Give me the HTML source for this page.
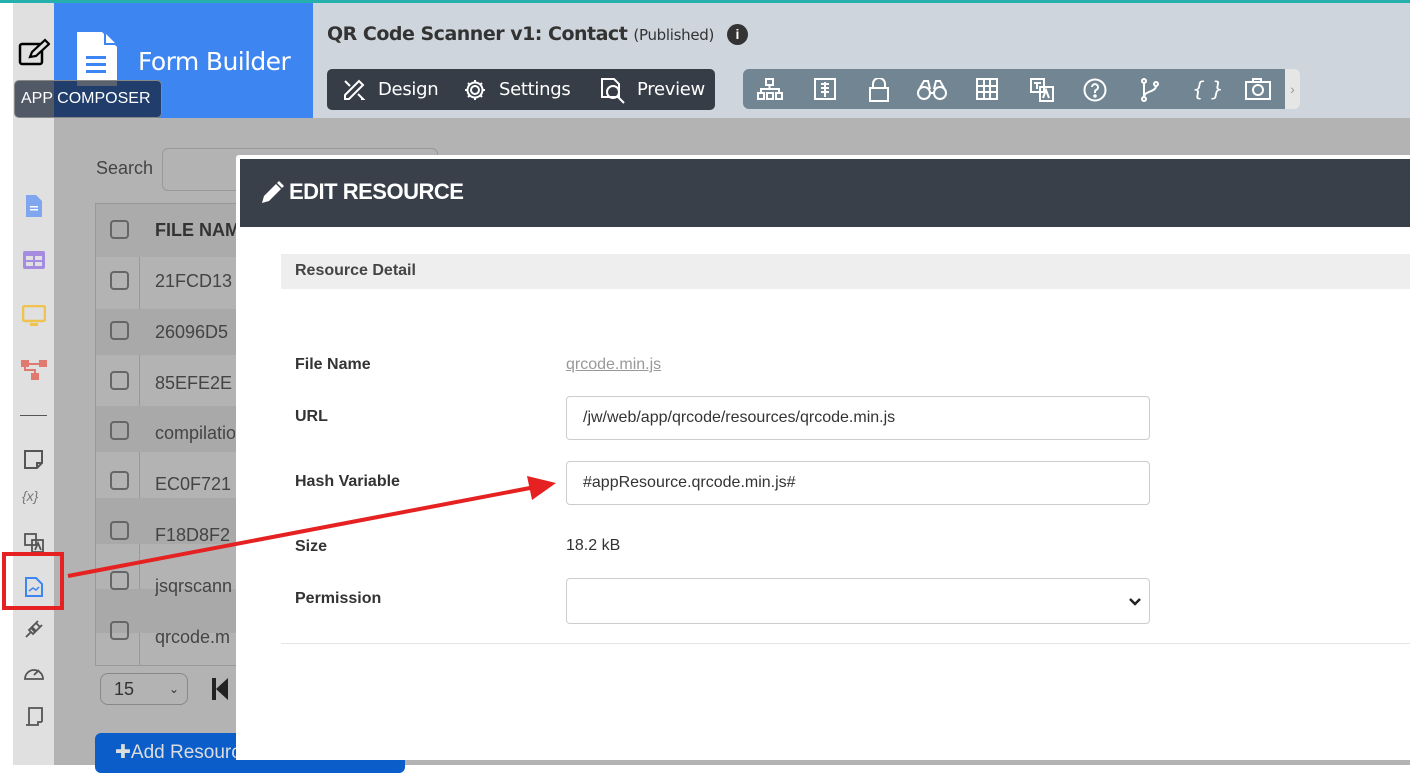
<!DOCTYPE html>
<html><head><meta charset="utf-8"><style>
*{box-sizing:border-box;margin:0;padding:0}
body{width:1410px;height:765px;overflow:hidden;position:relative;background:#fff;font-family:"Liberation Sans",sans-serif}
.a{position:absolute}
.tb svg{position:absolute;top:9px}
.cb{width:19px;height:19px;border:2px solid #666;border-radius:4px;margin-bottom:31px}
</style></head><body>
<div class="a" style="left:0;top:0;width:1410px;height:3px;background:#26b0ad"></div>
<div class="a" style="left:13px;top:3px;width:41px;height:762px;background:#e0e0e0"></div>
<div class="a" style="left:54px;top:3px;width:259px;height:115px;background:#3d85f0"></div>
<div class="a" style="left:313px;top:3px;width:1097px;height:115px;background:#cfd5dc"></div>
<div class="a" style="left:54px;top:118px;width:1356px;height:647px;background:#b3b3b3"></div>
<svg class="a" style="left:18px;top:38px" width="32" height="30" viewBox="0 0 32 30"><rect x="2" y="6" width="22" height="20" rx="2" fill="none" stroke="#000" stroke-width="2.5"/><path d="M12 19 L14 14 L27 2 L31 6 L18 18 Z" fill="#e0e0e0" stroke="#000" stroke-width="2.2"/></svg>
<svg class="a" style="left:75px;top:32px" width="44" height="56" viewBox="0 0 44 56"><path d="M2 0 H27 L42 15 V54 H2 Z" fill="#fff"/><path d="M29 0 L42 13 H29Z" fill="#3d85f0"/><path d="M31 2 L40 11 H31Z" fill="#fff"/><rect x="11" y="24" width="20" height="3" fill="#3d85f0"/><rect x="11" y="31" width="20" height="3" fill="#3d85f0"/><rect x="11" y="38" width="20" height="3" fill="#3d85f0"/></svg>
<div class="a" style="left:138px;top:47px;color:#fff;font-size:25px;font-family:'DejaVu Sans',sans-serif;letter-spacing:-0.6px">Form Builder</div>
<div class="a" style="left:14px;top:80px;width:148px;height:38px;background:rgba(20,30,50,0.7);border:1px solid #888;border-radius:5px;color:#fff;font-size:16px;line-height:36px;padding-left:6px">APP COMPOSER</div>
<div class="a" style="left:327px;top:23px;font-size:19px;font-weight:bold;color:#333;font-family:'DejaVu Sans',sans-serif;letter-spacing:-0.5px;white-space:nowrap">QR Code Scanner v1: Contact <span style="font-weight:normal;font-size:15px;letter-spacing:-0.3px">(Published)</span></div>
<div class="a" style="left:727px;top:24px;width:21px;height:21px;border-radius:50%;background:#333;color:#fff;font-size:14px;font-weight:bold;text-align:center;line-height:21px">i</div>
<div class="a" style="left:327px;top:69px;width:388px;height:41px;background:#373d46;border-radius:5px;color:#fff;font-size:18px;font-family:'DejaVu Sans',sans-serif;letter-spacing:-0.3px">
<svg class="a" style="left:15px;top:9px" width="24" height="24" viewBox="0 0 24 24" fill="none" stroke="#fff" stroke-width="2"><path d="M3 17 L17 3 L21 7 L7 21 L3 21Z M3 3 L8 8 M16 16 L21 21 L19 21"/></svg>
<span class="a" style="left:51px;top:10px">Design</span>
<svg class="a" style="left:136px;top:9px" width="24" height="24" viewBox="0 0 24 24" fill="none" stroke="#fff" stroke-width="2"><circle cx="12" cy="12" r="4"/><path d="M12 2v3M12 19v3M2 12h3M19 12h3M5 5l2 2M17 17l2 2M5 19l2-2M17 7l2-2"/><circle cx="12" cy="12" r="7.5"/></svg>
<span class="a" style="left:172px;top:10px">Settings</span>
<svg class="a" style="left:272px;top:8px" width="28" height="28" viewBox="0 0 28 28" fill="none" stroke="#fff" stroke-width="2"><path d="M3 2H15L20 7V20H3Z"/><circle cx="14" cy="15" r="6"/><path d="M18 19 L25 26"/></svg>
<span class="a" style="left:310px;top:10px">Preview</span></div>
<div class="a" style="left:743px;top:69px;width:542px;height:40px;background:#728592;border-radius:6px 0 0 6px"></div>
<div class="a" style="left:1285px;top:69px;width:15px;height:40px;background:#e6e6e6;border-radius:0 6px 6px 0;color:#999;font-size:14px;line-height:40px;text-align:center">›</div>
<div class="a tb" style="left:743px;top:69px;width:542px;height:40px">
<svg style="left:14px" width="26" height="22" viewBox="0 0 26 22" fill="none" stroke="#fff" stroke-width="2"><rect x="9" y="1" width="7" height="6"/><rect x="1" y="15" width="6" height="6"/><rect x="10" y="15" width="6" height="6"/><rect x="19" y="15" width="6" height="6"/><path d="M12.5 7V11M4 15V11H22V15"/></svg>
<svg style="left:71px" width="22" height="22" viewBox="0 0 22 22" fill="none" stroke="#fff" stroke-width="2"><rect x="1" y="1" width="20" height="20"/><path d="M7 6H15M7 10H15M7 14H15M11 4V19"/></svg>
<svg style="left:126px" width="20" height="24" viewBox="0 0 20 24" fill="none" stroke="#fff" stroke-width="2"><rect x="1" y="10" width="18" height="13"/><path d="M4 10V6a6 6 0 0 1 12 0v4"/></svg>
<svg style="left:174px" width="30" height="22" viewBox="0 0 30 22" fill="none" stroke="#fff" stroke-width="2"><circle cx="7" cy="15" r="6"/><circle cx="23" cy="15" r="6"/><path d="M13 15h4M3 10L7 3H11L13 11M27 10L23 3H19L17 11"/></svg>
<svg style="left:233px" width="22" height="22" viewBox="0 0 22 22" fill="none" stroke="#fff" stroke-width="2"><rect x="1" y="1" width="20" height="20"/><path d="M8 1V21M14 1V21M1 8H21M1 14H21"/></svg>
<svg style="left:287px" width="24" height="24" viewBox="0 0 24 24" fill="none" stroke="#fff" stroke-width="2"><rect x="1" y="1" width="13" height="13"/><rect x="10" y="9" width="13" height="14"/><path d="M4 5h7M7 5v6M13 20l3-8 3 8"/></svg>
<svg style="left:340px" width="24" height="24" viewBox="0 0 24 24" fill="none" stroke="#fff" stroke-width="2"><circle cx="12" cy="12" r="10.5"/><path d="M9 9a3 3 0 1 1 4 3c-1 .5-1 1-1 3"/><circle cx="12" cy="18" r="0.8" fill="#fff"/></svg>
<svg style="left:397px" width="20" height="24" viewBox="0 0 20 24" fill="none" stroke="#fff" stroke-width="2"><circle cx="4" cy="3" r="2"/><circle cx="4" cy="21" r="2"/><circle cx="16" cy="6" r="2"/><path d="M4 5V19M16 8c0 6-12 5-12 11"/></svg>
<span class="a" style="left:449px;top:8px;color:#fff;font-size:20px;font-style:italic;white-space:nowrap;font-family:'DejaVu Sans',sans-serif">{ }</span>
<svg style="left:502px" width="26" height="22" viewBox="0 0 26 22" fill="none" stroke="#fff" stroke-width="2"><rect x="1" y="4" width="24" height="17"/><path d="M8 4V1H16V4"/><circle cx="13" cy="12" r="5"/></svg>
</div>
<!-- sidebar icons -->
<svg class="a" style="left:24px;top:194px" width="20" height="24"><path d="M2 1H12L18 7V23H2Z" fill="#7fa6ee"/><rect x="6" y="12" width="8" height="1.5" fill="#fff"/><rect x="6" y="15" width="8" height="1.5" fill="#fff"/></svg>
<svg class="a" style="left:23px;top:251px" width="22" height="18"><rect x="0" y="0" width="22" height="18" rx="2" fill="#a58ce0"/><rect x="3" y="5" width="7" height="4" fill="#e0e0e0"/><rect x="12" y="5" width="7" height="4" fill="#e0e0e0"/><rect x="3" y="11" width="7" height="4" fill="#e0e0e0"/><rect x="12" y="11" width="7" height="4" fill="#e0e0e0"/></svg>
<svg class="a" style="left:22px;top:305px" width="24" height="22"><rect x="1" y="1" width="22" height="15" rx="2" fill="none" stroke="#f0c24e" stroke-width="2.5"/><rect x="8" y="18" width="8" height="3" fill="#f0c24e"/></svg>
<svg class="a" style="left:21px;top:360px" width="26" height="22"><rect x="0" y="0" width="8" height="7" fill="#e07a70"/><rect x="18" y="0" width="8" height="7" fill="#e07a70"/><rect x="10" y="13" width="8" height="7" fill="#e07a70"/><path d="M4 7 V10 H14 V13 M8 4H18" stroke="#e07a70" stroke-width="2" fill="none"/></svg>
<div class="a" style="left:20px;top:415px;width:27px;height:1px;background:#555"></div>
<svg class="a" style="left:24px;top:450px" width="20" height="20" fill="none" stroke="#555" stroke-width="2"><path d="M1 1H18V13L13 18H1Z M13 18V13H18"/></svg>
<div class="a" style="left:22px;top:488px;font-size:14px;color:#777;font-style:italic">{x}</div>
<svg class="a" style="left:24px;top:533px" width="20" height="20" fill="none" stroke="#555" stroke-width="1.8"><rect x="1" y="1" width="11" height="11"/><rect x="8" y="7" width="11" height="12"/><path d="M11 17l3-7 3 7"/></svg>
<svg class="a" style="left:25px;top:577px" width="18" height="20"><path d="M1 1H11L17 7V19H1Z" fill="none" stroke="#3d85f0" stroke-width="2"/><path d="M4 14 L8 11 L11 13 L14 10" stroke="#3d85f0" stroke-width="1.5" fill="none"/></svg>
<svg class="a" style="left:24px;top:619px" width="20" height="20" fill="none" stroke="#555" stroke-width="1.8"><path d="M2 18L7 13M7 9L11 13L9 15L5 11Z M9 7L14 2M13 11L18 6M8 8L12 4L16 8L12 12Z"/></svg>
<svg class="a" style="left:23px;top:663px" width="22" height="18" fill="none" stroke="#555" stroke-width="1.8"><path d="M2 16A9 9 0 1 1 20 16Z M11 12L16 7"/></svg>
<svg class="a" style="left:24px;top:705px" width="20" height="22" fill="none" stroke="#555" stroke-width="1.8"><path d="M5 20V3H18V17M2 20H14V17H18"/></svg>
<!-- background table -->
<div class="a" style="left:96px;top:158px;font-size:18px;color:#444">Search</div>
<div class="a" style="left:162px;top:148px;width:276px;height:43px;border:1px solid #999;border-radius:6px"></div>
<div class="a" style="left:95px;top:203px;width:145px;height:463px;border:1px solid #999"></div>
<div class="a" style="left:139px;top:203px;width:1px;height:463px;background:#999"></div>
<div class="a" style="left:96px;top:204px;width:144px;height:53px;background:#ababab"></div>
<div class="a" style="left:155px;top:220px;font-weight:bold;font-size:18px;color:#333">FILE NAM</div>
<div class="a" style="left:96px;top:309px;width:144px;height:46px;background:#a9a9a9"></div>
<div class="a" style="left:96px;top:406px;width:144px;height:46px;background:#a9a9a9"></div>
<div class="a" style="left:96px;top:498px;width:144px;height:46px;background:#a9a9a9"></div>
<div class="a" style="left:96px;top:589px;width:144px;height:44px;background:#a9a9a9"></div>
<div class="a" style="left:155px;top:256px;font-size:18px;color:#444;line-height:50.8px;width:80px;overflow:hidden;white-space:nowrap">21FCD13<br>26096D5<br>85EFE2E<br>compilatio<br>EC0F721<br>F18D8F2<br>jsqrscann<br>qrcode.m</div>
<div class="a cb" style="left:110px;top:220px"></div>
<div class="a" style="left:110px;top:271px"><div class="cb"></div><div class="cb"></div><div class="cb"></div><div class="cb"></div><div class="cb"></div><div class="cb"></div><div class="cb"></div><div class="cb"></div></div>
<div class="a" style="left:100px;top:673px;width:88px;height:32px;border:1px solid #888;border-radius:8px;font-size:18px;color:#333;padding:5px 13px">15<span style="position:absolute;right:8px;font-size:12px;top:8px">⌄</span></div>
<div class="a" style="left:212px;top:678px;width:4px;height:22px;background:#222"></div><div class="a" style="left:216px;top:678px;width:0;height:0;border-top:11px solid transparent;border-bottom:11px solid transparent;border-right:12px solid #222"></div>
<div class="a" style="left:95px;top:733px;width:310px;height:40px;background:#0b5ec9;border-radius:6px;color:#ddd;font-size:19px;padding:8px 20px">✚Add Resource</div>
<!-- modal -->
<div class="a" style="left:236px;top:155px;width:1174px;height:605px;background:#fff;border-radius:3px 0 0 0"></div>
<div class="a" style="left:240px;top:159px;width:1170px;height:68px;background:#3a4049"></div>
<svg class="a" style="left:260px;top:181px" width="24" height="24" viewBox="0 0 24 24"><path d="M2 22L4 15L16 3L21 8L9 20Z" fill="#fff"/><path d="M17 2L19 0L24 5L22 7Z" fill="#fff"/></svg>
<div class="a" style="left:289px;top:179px;color:#fff;font-size:22px;font-weight:bold;letter-spacing:-0.5px">EDIT RESOURCE</div>
<div class="a" style="left:281px;top:254px;width:1129px;height:35px;background:#eee"></div>
<div class="a" style="left:295px;top:262px;font-size:16px;font-weight:bold;color:#444">Resource Detail</div>
<div class="a" style="left:295px;top:356px;font-size:16px;font-weight:bold;color:#333">File Name</div>
<div class="a" style="left:566px;top:356px;font-size:16px;color:#999;text-decoration:underline">qrcode.min.js</div>
<div class="a" style="left:295px;top:408px;font-size:16px;font-weight:bold;color:#333">URL</div>
<div class="a" style="left:566px;top:396px;width:584px;height:44px;border:1px solid #ccc;border-radius:4px;font-size:16px;color:#333;padding:12px 16px">/jw/web/app/qrcode/resources/qrcode.min.js</div>
<div class="a" style="left:295px;top:473px;font-size:16px;font-weight:bold;color:#333">Hash Variable</div>
<div class="a" style="left:566px;top:461px;width:584px;height:44px;border:1px solid #ccc;border-radius:4px;font-size:16px;color:#333;padding:12px 16px">#appResource.qrcode.min.js#</div>
<div class="a" style="left:295px;top:538px;font-size:16px;font-weight:bold;color:#333">Size</div>
<div class="a" style="left:566px;top:537px;font-size:16px;color:#333">18.2 kB</div>
<div class="a" style="left:295px;top:590px;font-size:16px;font-weight:bold;color:#333">Permission</div>
<div class="a" style="left:566px;top:578px;width:584px;height:46px;border:1px solid #ccc;border-radius:4px"><svg style="position:absolute;right:8px;top:18px" width="12" height="10"><path d="M1 2L6 7L11 2" fill="none" stroke="#222" stroke-width="2.5"/></svg></div>
<div class="a" style="left:281px;top:643px;width:1129px;height:1px;background:#e5e5e5"></div>
<div class="a" style="left:2px;top:552px;width:62px;height:58px;border:4px solid #e52121"></div>
<svg class="a" style="left:0;top:0" width="1410" height="765"><line x1="68" y1="576" x2="530" y2="488" stroke="#e52121" stroke-width="4"/><polygon points="556,483 527,476 532,500" fill="#e52121"/></svg>
</body></html>
